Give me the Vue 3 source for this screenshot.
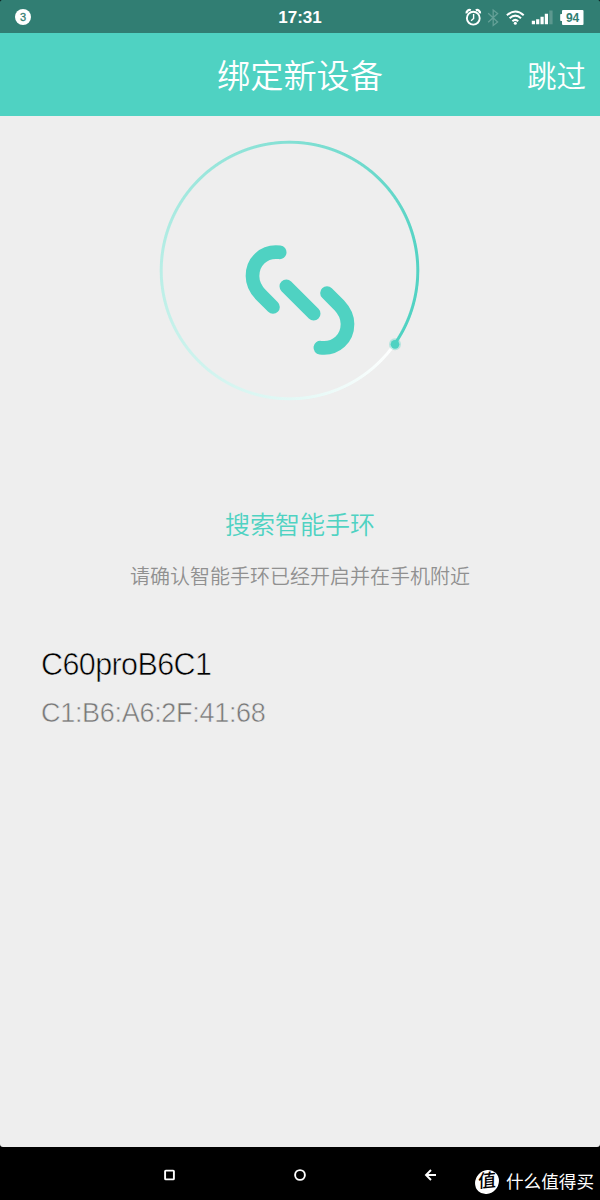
<script setup>
const device = { name: 'C60proB6C1', address: 'C1:B6:A6:2F:41:68' }
</script>

<template>
  <div class="screen">
    <header class="status">
      <span class="notice">3</span>
      <span class="time">17:31</span>
      <svg class="indicators" viewBox="0 0 130 33">
        <g fill="none" stroke="#fff" stroke-width="1.9">
          <circle cx="13.3" cy="17.2" r="6.4" />
          <path d="M13.6 13v4.500l-2.500 2.200" stroke-width="1.4" />
          <path d="M6.600 12.400a3 3 0 0 1 4.200-3.200M20 12.400a3 3 0 0 0-4.200-3.200" stroke-width="2.300" />
        </g>
        <path d="M28.2 12.300l9.400 8.600-4.400 3.500V9l4.400 3.600-9.400 8.600" fill="none" stroke="#64a097" stroke-width="1.3" />
        <g fill="none" stroke="#fff" stroke-width="2.100">
          <path d="M46.900 14.200q8.400-7.400 16.800 0" />
          <path d="M49.600 17.200q5.700-5 11.400 0" />
          <path d="M52.400 20.200q2.900-2.600 5.800 0" />
        </g>
        <circle cx="55.3" cy="22.300" r="1.500" fill="#fff" />
        <path d="M71.800 19.800h3.200v3.500h-3.200zM76.100 18.200h3.200v5.100h-3.200zM80.500 15.800h3.200v7.500h-3.200zM84.800 12.800h3.200v10.500h-3.200z" fill="#fff" />
        <path d="M89.300 9.500h3.300v13.800h-3.300z" fill="#5d988f" />
        <path d="M103 9h19.500a1 1 0 0 1 1 1v13a1 1 0 0 1-1 1H103a1 1 0 0 1-1-1v-3h-1a.8.8 0 0 1-.8-.8v-5.400a.8.8 0 0 1 .8-.8h1v-3a1 1 0 0 1 1-1z" fill="#fff" />
        <text x="112.600" y="20.600" text-anchor="middle" class="charge">94</text>
      </svg>
    </header>

    <nav class="bar">
      <h1>绑定新设备</h1>
      <span class="skip">跳过</span>
    </nav>

    <main>
      <div class="scanner">
        <div class="ring"></div>
        <svg class="link" viewBox="0 0 840 840">
          <g fill="none" stroke="#4fd2c2" stroke-width="41" stroke-linecap="round" stroke-linejoin="round">
            <path d="M389 367C340 361 307.500 396 307.500 438C307.500 460 317 478 332 494L369 531" />
            <path d="M409 469L491 551" />
            <path d="M531 489L568 526C583 542 592.500 560 592.500 582C592.500 624 560 659 511 653" />
          </g>
          <circle cx="735" cy="643" r="18" fill="#4fd2c2" opacity=".35" />
          <circle cx="735" cy="643" r="13" fill="#4fd2c2" />
        </svg>
      </div>
      <p class="searching">搜索智能手环</p>
      <p class="hint">请确认智能手环已经开启并在手机附近</p>
      <section class="device">
        <p class="name">{{ device.name }}</p>
        <p class="address">{{ device.address }}</p>
      </section>
    </main>

    <footer>
      <svg class="keys" viewBox="0 0 600 52">
        <g fill="none" stroke="#fff" stroke-width="1.900">
          <rect x="165.100" y="22.600" width="8.800" height="8.800" rx=".7" />
          <circle cx="300" cy="27" r="4.900" />
          <path d="M436 27h-9.500M431 22l-5 5 5 5" />
        </g>
      </svg>
      <div class="brand"><span class="seal">值</span><span>什么值得买</span></div>
    </footer>
  </div>
</template>

<style>
body { background: #000; }
</style>

<style scoped>
.screen {
  width: 600px;
  height: 1200px;
  display: flex;
  flex-direction: column;
  background: #000;
  overflow: hidden;
  font-family: "Liberation Sans", "Noto Sans CJK SC", sans-serif;
}
p, h1 { margin: 0; font-weight: 400; white-space: nowrap; }
.status {
  height: 33px;
  flex: none;
  display: grid;
  grid-template-columns: 140px 1fr 140px;
  align-items: center;
  background: #317e73;
  border-radius: 2px 2px 0 0;
  color: #fff;
}
.notice {
  width: 16px;
  height: 16px;
  margin-left: 15px;
  border-radius: 50%;
  background: #fff;
  color: #317e73;
  font: 400 11px/16px "Liberation Sans", sans-serif;
  -webkit-text-stroke: 0.3px #317e73;
  text-align: center;
}
.time { text-align: center; font-size: 17px; font-weight: 700; line-height: 33px; padding-top: 1px; }
.indicators { width: 130px; height: 33px; }
.charge { font: 700 12px "Liberation Sans", sans-serif; fill: #317e73; }
.bar {
  height: 83px;
  flex: none;
  display: grid;
  grid-template-columns: 100px 1fr 100px;
  align-items: center;
  background: #4fd2c2;
  color: #fff;
}
h1 { grid-column: 2; padding-top: 4px; font-size: 33.2px; font-weight: 350; line-height: 40px; text-align: center; }
.skip { padding: 4px 14px 0 0; font-size: 29.5px; font-weight: 350; line-height: 40px; text-align: right; }
main {
  height: 1031px;
  flex: none;
  display: flex;
  flex-direction: column;
  background: #eee;
  border-radius: 0 0 3px 3px;
}
.scanner {
  width: 280px;
  height: 280px;
  margin: 14px 0 0 150px;
  display: grid;
}
.ring, .link { grid-area: 1 / 1; }
.ring {
  width: 261px;
  height: 261px;
  margin: 10px 0 0 9px;
  border-radius: 50%;
  background: conic-gradient(from 125deg, #fff 0deg, #e2f8f5 55deg, #b9eee6 145deg, #83e0d4 235deg, #55d3c4 315deg, #4fd2c2 360deg);
  -webkit-mask: radial-gradient(circle closest-side, transparent 126.3px, #000 127.3px, #000 129.3px, transparent 130.3px);
  mask: radial-gradient(circle closest-side, transparent 126.3px, #000 127.3px, #000 129.3px, transparent 130.3px);
}
.link { width: 280px; height: 280px; z-index: 1; }
.searching { margin-top: 95px; font-size: 25px; font-weight: 350; line-height: 40px; text-align: center; color: #4fd2c2; }
.hint { margin-top: 17px; font-size: 20px; font-weight: 350; line-height: 30px; text-align: center; color: #909090; }
.device { margin: 52px 0 0 41px; }
.name { font-size: 30.5px; line-height: 40px; letter-spacing: -0.6px; color: #000; -webkit-text-stroke: 0.6px #eee; }
.address { margin-top: 9px; font-size: 27px; line-height: 40px; letter-spacing: -0.3px; color: #787878; -webkit-text-stroke: 0.5px #eee; }
footer { height: 53px; flex: none; position: relative; color: #fff; }
.keys { display: block; width: 600px; height: 52px; margin-top: 1px; }
.brand {
  position: absolute;
  left: 475px;
  top: 23px;
  display: flex;
  align-items: center;
  gap: 7px;
  font-size: 17.6px;
  line-height: 24px;
  white-space: nowrap;
}
.seal {
  width: 24px;
  height: 24px;
  border-radius: 50%;
  background: #fff;
  color: #000;
  font-size: 18px;
  font-weight: 500;
  line-height: 23px;
  text-align: center;
  transform: rotate(-5deg) skewX(-6deg);
}
</style>
